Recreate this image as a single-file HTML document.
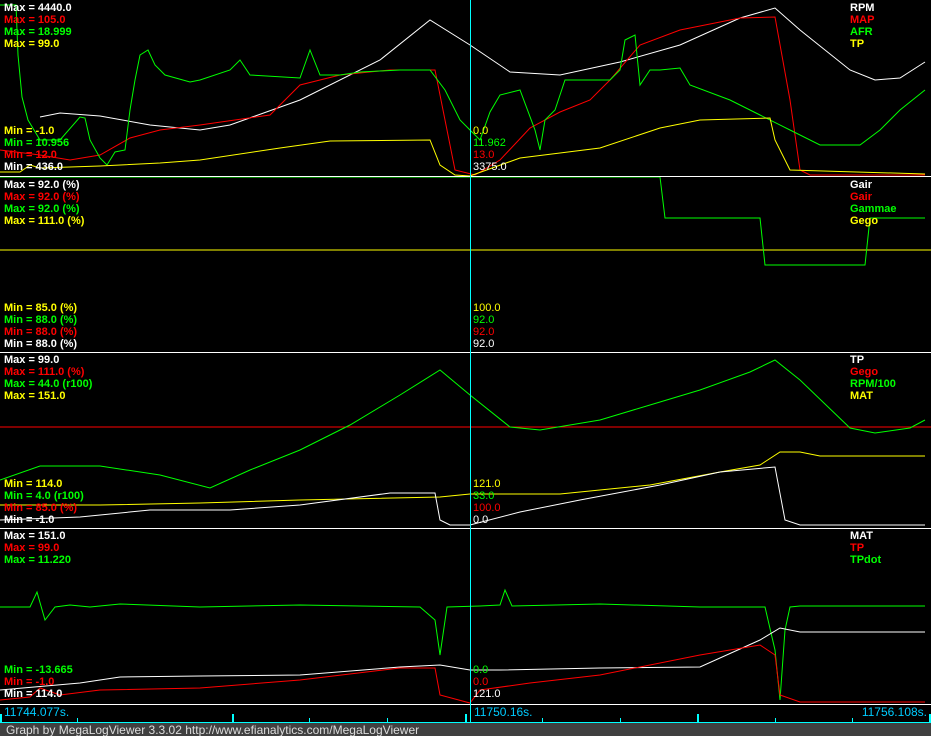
<!DOCTYPE html><html><head><style>
html,body{margin:0;padding:0;background:#000;width:931px;height:736px;overflow:hidden}
svg{display:block}
text{font-family:"Liberation Sans",Arial,sans-serif;font-size:11px;font-weight:bold}
.n{font-weight:normal}
</style></head><body>
<svg width="931" height="736" xmlns="http://www.w3.org/2000/svg">
<rect width="931" height="736" fill="#000"/>
<g fill="none" stroke-width="1">
<!-- panel 1 -->
<polyline stroke="#fff" points="40,117 60,113 100,116 150,125 200,130 230,125 300,100 380,60 430,20 470,45 510,72 560,75 620,62 680,45 740,18 775,8 800,30 850,70 875,80 900,78 925,62"/>
<polyline stroke="#f00" points="0,150 40,155 70,160 100,155 130,138 160,130 200,125 270,115 300,85 340,75 390,70 435,70 445,120 455,170 475,175 500,160 530,128 560,112 590,100 610,80 640,45 680,30 740,18 775,17 790,100 800,170 810,175 925,175"/>
<polyline stroke="#0f0" points="0,5 16,5 18,55 22,97 28,120 40,140 60,140 80,117 85,118 90,140 100,158 107,165 115,152 125,150 130,110 135,80 140,55 148,50 155,65 165,75 190,82 200,80 230,70 240,60 250,75 300,78 310,50 320,75 340,75 360,72 400,70 430,70 445,90 460,120 470,130 480,140 490,112 500,95 520,90 535,130 540,150 545,120 555,110 565,80 580,80 610,80 620,70 625,40 635,35 640,85 650,70 660,70 680,68 690,85 730,100 760,115 790,130 820,145 860,145 880,130 900,110 925,90"/>
<polyline stroke="#ff0" points="0,172 20,172 30,165 40,168 100,166 160,163 200,160 280,148 330,141 430,140 440,165 455,175 470,176 520,158 600,148 660,128 700,120 770,118 775,140 790,170 925,174"/>
<!-- panel 2 -->
<line x1="0" y1="250" x2="931" y2="250" stroke="#ff0"/>
<polyline stroke="#0f0" points="0,177 660,177 665,218 760,218 765,265 865,265 870,218 925,218"/>
<!-- panel 3 -->
<line x1="0" y1="427" x2="931" y2="427" stroke="#f00"/>
<polyline stroke="#0f0" points="0,480 40,466 100,466 160,475 210,488 250,470 300,450 350,425 400,395 440,370 470,395 510,427 540,430 600,420 650,405 700,390 750,372 775,360 800,380 850,428 875,433 910,428 925,420"/>
<polyline stroke="#ff0" points="0,505 100,505 200,503 300,500 440,497 470,494 560,494 650,485 720,472 760,465 780,452 800,452 820,456 925,456"/>
<polyline stroke="#fff" points="0,520 80,517 150,510 230,510 300,505 390,493 435,493 440,520 450,525 470,525 520,512 580,500 660,485 720,472 775,467 785,520 800,525 925,525"/>
<!-- panel 4 -->
<polyline stroke="#0f0" points="0,607 30,607 37,592 45,620 55,607 70,605 90,607 120,604 200,607 300,605 420,607 435,620 440,655 447,607 480,606 500,605 505,590 512,606 600,604 700,607 765,607 775,650 780,700 785,630 790,607 800,606 925,606"/>
<polyline stroke="#fff" points="0,690 80,683 120,677 200,676 300,675 400,667 440,665 470,670 500,670 600,668 700,667 760,640 780,628 800,632 925,632"/>
<polyline stroke="#f00" points="0,700 30,697 40,688 60,695 100,690 200,688 300,680 400,668 435,668 440,695 470,703 480,690 530,683 600,675 700,655 760,645 775,655 780,695 800,702 925,702"/>
<!-- separators -->
<line x1="0" y1="176.5" x2="931" y2="176.5" stroke="#fff"/>
<line x1="0" y1="352.5" x2="931" y2="352.5" stroke="#fff"/>
<line x1="0" y1="528.5" x2="931" y2="528.5" stroke="#fff"/>
<line x1="0" y1="704.5" x2="931" y2="704.5" stroke="#fff"/>
<line x1="470.5" y1="0" x2="470.5" y2="722" stroke="#0ff"/>
</g>
<!-- ticks -->
<g fill="#0ff">
<rect x="0" y="714" width="2" height="8"/><rect x="77" y="718" width="1" height="4"/><rect x="232" y="714" width="2" height="8"/><rect x="309" y="718" width="1" height="4"/><rect x="387" y="718" width="1" height="4"/><rect x="465" y="714" width="2" height="8"/><rect x="542" y="718" width="1" height="4"/><rect x="620" y="718" width="1" height="4"/><rect x="697" y="714" width="2" height="8"/><rect x="775" y="718" width="1" height="4"/><rect x="852" y="718" width="1" height="4"/><rect x="929" y="714" width="2" height="8"/>
<rect x="0" y="722" width="931" height="1"/>
</g>
<rect x="0" y="723" width="931" height="13" fill="#404040"/>
<text x="6" y="734" class="n" fill="#ddd" style="font-size:12px">Graph by MegaLogViewer 3.3.02 http://www.efianalytics.com/MegaLogViewer</text>
<g class="n" style="font-size:12px" fill="#0cf">
<text x="4" y="716" class="n" style="font-size:12px">11744.077s.</text>
<text x="474" y="716" class="n" style="font-size:12px">11750.16s.</text>
<text x="927" y="716" text-anchor="end" class="n" style="font-size:12px">11756.108s.</text>
</g>
<!-- panel1 labels -->
<text x="4" y="11" fill="#fff">Max = 4440.0</text>
<text x="4" y="23" fill="#f00">Max = 105.0</text>
<text x="4" y="35" fill="#0f0">Max = 18.999</text>
<text x="4" y="47" fill="#ff0">Max = 99.0</text>
<text x="4" y="134" fill="#ff0">Min = -1.0</text>
<text x="4" y="146" fill="#0f0">Min = 10.956</text>
<text x="4" y="158" fill="#f00">Min = 12.0</text>
<text x="4" y="170" fill="#fff">Min = 436.0</text>
<text x="850" y="11" fill="#fff">RPM</text>
<text x="850" y="23" fill="#f00">MAP</text>
<text x="850" y="35" fill="#0f0">AFR</text>
<text x="850" y="47" fill="#ff0">TP</text>
<text x="473" y="134" class="n" fill="#ff0">0.0</text>
<text x="473" y="146" class="n" fill="#0f0">11.962</text>
<text x="473" y="158" class="n" fill="#f00">13.0</text>
<text x="473" y="170" class="n" fill="#fff">3375.0</text>
<!-- panel2 -->
<text x="4" y="188" fill="#fff">Max = 92.0 (%)</text>
<text x="4" y="200" fill="#f00">Max = 92.0 (%)</text>
<text x="4" y="212" fill="#0f0">Max = 92.0 (%)</text>
<text x="4" y="224" fill="#ff0">Max = 111.0 (%)</text>
<text x="4" y="311" fill="#ff0">Min = 85.0 (%)</text>
<text x="4" y="323" fill="#0f0">Min = 88.0 (%)</text>
<text x="4" y="335" fill="#f00">Min = 88.0 (%)</text>
<text x="4" y="347" fill="#fff">Min = 88.0 (%)</text>
<text x="850" y="188" fill="#fff">Gair</text>
<text x="850" y="200" fill="#f00">Gair</text>
<text x="850" y="212" fill="#0f0">Gammae</text>
<text x="850" y="224" fill="#ff0">Gego</text>
<text x="473" y="311" class="n" fill="#ff0">100.0</text>
<text x="473" y="323" class="n" fill="#0f0">92.0</text>
<text x="473" y="335" class="n" fill="#f00">92.0</text>
<text x="473" y="347" class="n" fill="#fff">92.0</text>
<!-- panel3 -->
<text x="4" y="363" fill="#fff">Max = 99.0</text>
<text x="4" y="375" fill="#f00">Max = 111.0 (%)</text>
<text x="4" y="387" fill="#0f0">Max = 44.0 (r100)</text>
<text x="4" y="399" fill="#ff0">Max = 151.0</text>
<text x="4" y="487" fill="#ff0">Min = 114.0</text>
<text x="4" y="499" fill="#0f0">Min = 4.0 (r100)</text>
<text x="4" y="511" fill="#f00">Min = 85.0 (%)</text>
<text x="4" y="523" fill="#fff">Min = -1.0</text>
<text x="850" y="363" fill="#fff">TP</text>
<text x="850" y="375" fill="#f00">Gego</text>
<text x="850" y="387" fill="#0f0">RPM/100</text>
<text x="850" y="399" fill="#ff0">MAT</text>
<text x="473" y="487" class="n" fill="#ff0">121.0</text>
<text x="473" y="499" class="n" fill="#0f0">33.0</text>
<text x="473" y="511" class="n" fill="#f00">100.0</text>
<text x="473" y="523" class="n" fill="#fff">0.0</text>
<!-- panel4 -->
<text x="4" y="539" fill="#fff">Max = 151.0</text>
<text x="4" y="551" fill="#f00">Max = 99.0</text>
<text x="4" y="563" fill="#0f0">Max = 11.220</text>
<text x="4" y="673" fill="#0f0">Min = -13.665</text>
<text x="4" y="685" fill="#f00">Min = -1.0</text>
<text x="4" y="697" fill="#fff">Min = 114.0</text>
<text x="850" y="539" fill="#fff">MAT</text>
<text x="850" y="551" fill="#f00">TP</text>
<text x="850" y="563" fill="#0f0">TPdot</text>
<text x="473" y="673" class="n" fill="#0f0">0.0</text>
<text x="473" y="685" class="n" fill="#f00">0.0</text>
<text x="473" y="697" class="n" fill="#fff">121.0</text>
</svg>
</body></html>
